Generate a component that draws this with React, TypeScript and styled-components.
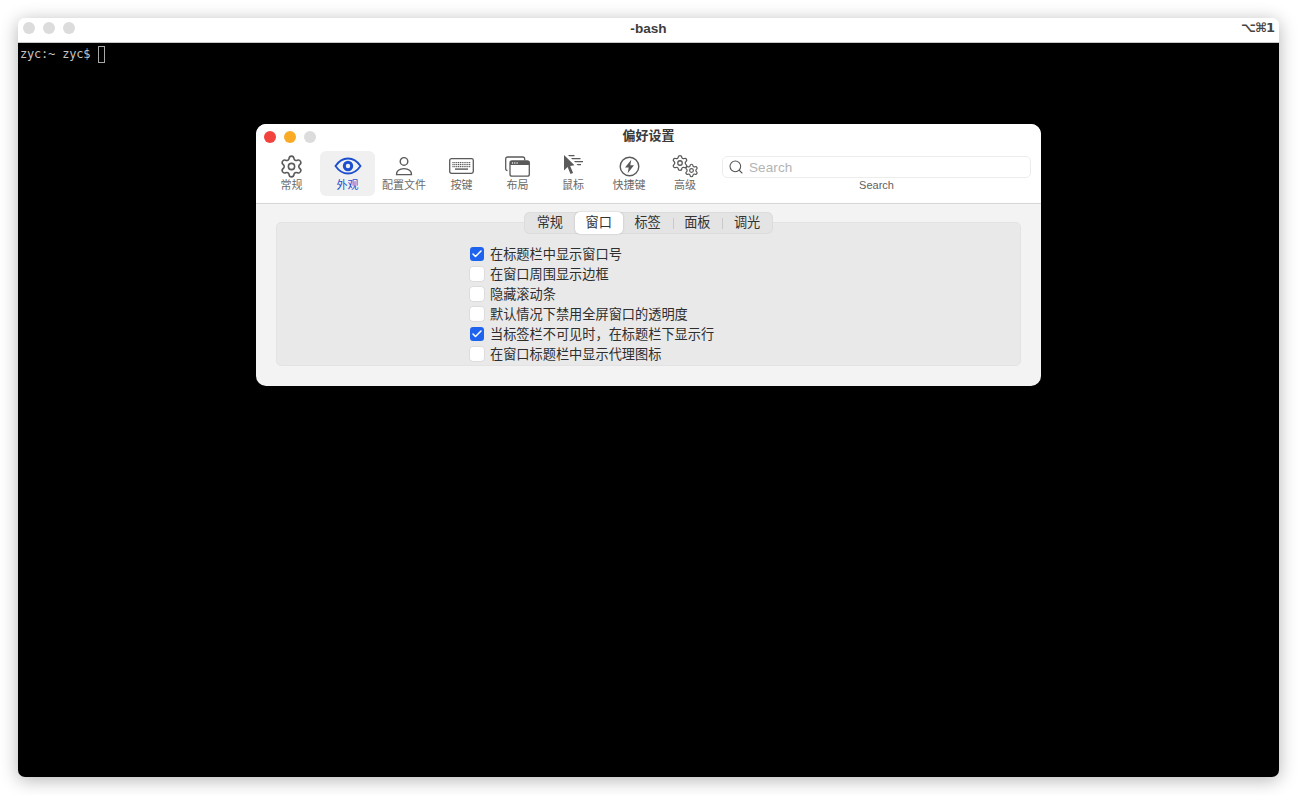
import type { ReactElement } from "react";
import { createGlobalStyle, styled } from "styled-components";
import { Check, Search as SearchIcon, Settings } from "lucide-react";

const Global = createGlobalStyle`
    html, body {
        margin: 0;
        padding: 0;
        background: #ffffff;
    }
    * {
        box-sizing: border-box;
    }
`;

const Desktop = styled.div`
    position: relative;
    width: 1297px;
    height: 795px;
    padding: 18px;
    overflow: hidden;
    font-family: "Liberation Sans", "Noto Sans CJK SC", sans-serif;
`;

const Terminal = styled.div`
    display: flex;
    flex-direction: column;
    width: 1261px;
    height: 759px;
    border-radius: 7px;
    overflow: hidden;
    box-shadow: 0 3px 18px rgba(0, 0, 0, 0.3);
`;

const TitleBar = styled.div`
    position: relative;
    flex: 0 0 25px;
    padding-bottom: 3px;
    display: flex;
    align-items: center;
    justify-content: center;
    background: #ffffff;
    border-bottom: 1px solid #c8c8c8;
`;

const Lights = styled.div`
    position: absolute;
    left: 5px;
    top: 4px;
    display: flex;
    gap: 8px;
`;

const Light = styled.span<{ $color: string }>`
    width: 12px;
    height: 12px;
    border-radius: 50%;
    background: ${(p) => p.$color};
`;

const TitleText = styled.div`
    font-size: 13.6px;
    font-weight: 700;
    color: #3c3c3c;
`;

const Shortcut = styled.div`
    position: absolute;
    right: 5px;
    top: 2px;
    font-size: 13px;
    font-weight: 700;
    color: #444444;
    font-family: "DejaVu Sans", sans-serif;
    letter-spacing: -1px;
`;

const Screen = styled.div`
    flex: 1;
    background: #000000;
    padding: 3px 2px;
    display: flex;
    align-items: flex-start;
    font-family: "DejaVu Sans Mono", monospace;
    font-size: 12px;
    letter-spacing: -0.2px;
    line-height: 16px;
    color: #c4c4c4;
    white-space: pre;
`;

const Cursor = styled.span`
    width: 7px;
    height: 17px;
    margin-left: 1px;
    border: 1px solid #a8a8a8;
`;

const Prefs = styled.div`
    position: absolute;
    left: 256px;
    top: 124px;
    width: 785px;
    height: 262px;
    border-radius: 10px;
    overflow: hidden;
    background: #f3f3f3;
    display: flex;
    flex-direction: column;
`;

const Header = styled.div`
    position: relative;
    flex: 0 0 80px;
    background: #ffffff;
    border-bottom: 1px solid #d6d6d6;
`;

const PrefsLights = styled(Lights)`
    left: 8px;
    top: 7px;
`;

const PrefsTitle = styled.div`
    text-align: center;
    padding-top: 3px;
    padding-bottom: 1px;
    font-size: 13px;
    line-height: 18px;
    font-weight: 700;
    color: #3a3a3a;
`;

const Toolbar = styled.div`
    display: flex;
    padding: 5px 0 0 7px;
`;

const ToolItem = styled.div<{ $active?: boolean; $width?: number }>`
    width: ${(p) => p.$width ?? 56}px;
    height: 45px;
    padding-top: 4px;
    display: flex;
    flex-direction: column;
    align-items: center;
    border-radius: 6px;
    background: ${(p) => (p.$active ? "#f0f0f0" : "transparent")};
    color: ${(p) => (p.$active ? "#1b4fd0" : "#6a6a6a")};
`;

const ToolIcon = styled.div`
    height: 22px;
    display: flex;
    align-items: center;
    justify-content: center;
    color: #5a5a5a;
`;

const ActiveIcon = styled(ToolIcon)`
    color: #1b4fd0;
`;

const ToolLabel = styled.div`
    margin-top: 1px;
    font-size: 11px;
    line-height: 15px;
`;

const SearchBlock = styled.div`
    position: absolute;
    left: 466px;
    top: 32px;
    width: 309px;
    display: flex;
    flex-direction: column;
    align-items: center;
`;

const SearchField = styled.div`
    width: 100%;
    height: 22px;
    padding-left: 5px;
    display: flex;
    align-items: center;
    gap: 5px;
    border: 1px solid #ececec;
    border-radius: 5px;
    font-size: 13.5px;
    letter-spacing: 0.1px;
    color: #b4b4b4;
`;

const SearchLabel = styled.div`
    font-size: 11px;
    line-height: 14px;
    color: #5f5f5f;
`;

const Body = styled.div`
    position: relative;
    flex: 1;
    padding: 18px 20px 20px;
`;

const Tabs = styled.div`
    position: absolute;
    left: 268px;
    top: 8px;
    width: 249px;
    height: 22px;
    padding: 0 1px;
    display: flex;
    align-items: center;
    background: #e4e4e4;
    border-radius: 6px;
    box-shadow: inset 0 0 0 1px #dcdcdc;
`;

const Tab = styled.div<{ $active?: boolean; $divider?: boolean }>`
    position: relative;
    flex: ${(p) => (p.$active ? "0 0 48px" : "1")};
    height: ${(p) => (p.$active ? "22px" : "20px")};
    padding-bottom: 3px;
    display: flex;
    align-items: center;
    justify-content: center;
    font-size: 13.2px;
    color: #333333;
    border-radius: 5px;
    background: ${(p) => (p.$active ? "#ffffff" : "transparent")};
    box-shadow: ${(p) => (p.$active ? "0 0 2px rgba(0, 0, 0, 0.22)" : "none")};

    &::before {
        content: "";
        display: ${(p) => (p.$divider ? "block" : "none")};
        position: absolute;
        left: 0;
        top: 5px;
        height: 11px;
        width: 1px;
        background: #c9c9c9;
    }
`;

const Group = styled.div`
    height: 144px;
    padding: 21px 0 0 193px;
    background: #e9e9e9;
    border: 1px solid #e3e3e3;
    border-radius: 5px;
    display: flex;
    flex-direction: column;
`;

const Row = styled.div`
    height: 20px;
    display: flex;
    align-items: center;
    gap: 6px;
    font-size: 13.2px;
    color: #2e2e2e;
`;

const RowText = styled.span`
    padding-bottom: 2px;
`;

const Box = styled.div<{ $checked?: boolean }>`
    width: 14px;
    height: 14px;
    display: flex;
    align-items: center;
    justify-content: center;
    border-radius: 3px;
    color: #ffffff;
    background: ${(p) => (p.$checked ? "#1d63ee" : "#ffffff")};
    box-shadow: ${(p) => (p.$checked ? "none" : "0 0 0 0.5px #cfcfcf")};
`;

const GearPair = styled.div`
    position: relative;
    width: 28px;
    height: 22px;
    margin-top: -3px;
`;

const SmallGear = styled.div`
    position: absolute;
    right: 0;
    bottom: -2px;
    line-height: 0;
`;

function EyeIcon() {
    return (
        <svg width="28" height="18" viewBox="0 0 28 18" fill="none">
            <path d="M1.5 9C5 3.8 9 1.5 14 1.5S23 3.8 26.5 9C23 14.2 19 16.5 14 16.5S5 14.2 1.5 9Z" stroke="currentColor" strokeWidth="1.8" />
            <circle cx="14" cy="9" r="5.2" fill="currentColor" />
            <circle cx="14" cy="9" r="2.2" fill="#f0f0f0" />
        </svg>
    );
}

function PersonIcon() {
    return (
        <svg width="20" height="20" viewBox="0 0 20 20" fill="none" stroke="currentColor" strokeWidth="1.4">
            <circle cx="10" cy="5.4" r="3.8" />
            <path d="M2.5 18.6h15c.3-3.6-3-6-7.5-6s-7.8 2.4-7.5 6Z" />
        </svg>
    );
}

function KeyboardIcon() {
    const keys: ReactElement[] = [];
    for (let r = 0; r < 3; r++) {
        for (let c = 0; c < 10; c++) {
            keys.push(<rect key={`${r}-${c}`} x={3.4 + c * 1.85} y={4 + r * 2} width="1.2" height="1.2" fill="currentColor" />);
        }
    }
    return (
        <svg width="25" height="16" viewBox="0 0 25 16" fill="none">
            <rect x="0.7" y="0.7" width="23.6" height="14.6" rx="1.8" stroke="currentColor" strokeWidth="1.3" />
            {keys}
            <rect x="6" y="10.4" width="13" height="1.4" fill="currentColor" />
        </svg>
    );
}

function LayoutIcon() {
    return (
        <svg width="25" height="21" viewBox="0 0 25 21" fill="none" stroke="currentColor" strokeWidth="1.3">
            <path d="M2.5 14.5C1.3 14.5.7 13.8.7 12.8V3C.7 1.7 1.5 1 2.7 1h15c1.3 0 2 .7 2 2v1.5" />
            <rect x="5" y="5" width="19.3" height="15.2" rx="2" fill="#ffffff" />
            <path d="M5 5.8c0-.5.4-.8.8-.8h17.7c.5 0 .8.3.8.8V9H5Z" fill="currentColor" stroke="none" />
            <circle cx="7.5" cy="7" r=".7" fill="#ffffff" stroke="none" />
            <circle cx="9.8" cy="7" r=".7" fill="#ffffff" stroke="none" />
            <circle cx="12.1" cy="7" r=".7" fill="#ffffff" stroke="none" />
        </svg>
    );
}

function PointerIcon() {
    return (
        <svg width="21" height="24" viewBox="0 0 21 24" fill="currentColor">
            <path d="M1 1l10.5 10.3-4.3.6 2.9 7-2.6 1.1-2.9-7L1 16.5Z" />
            <path d="M5 1h6.5v1.2H6.2ZM8 4h9.5v1.2H9.2ZM11 7h9v1.2h-7.8ZM13.5 10H18v1.2h-3.3Z" />
        </svg>
    );
}

function BoltIcon() {
    return (
        <svg width="21" height="21" viewBox="0 0 21 21" fill="none">
            <circle cx="10.5" cy="10.5" r="9.3" stroke="currentColor" strokeWidth="1.4" />
            <path d="M12.3 3.8 6 11.6h3.7l-1 5.6 6.3-7.9h-3.7Z" fill="currentColor" />
        </svg>
    );
}

function GearsIcon() {
    return (
        <GearPair>
            <Settings size={18} strokeWidth={1.7} />
            <SmallGear>
                <Settings size={15} strokeWidth={1.9} />
            </SmallGear>
        </GearPair>
    );
}

const tabs = ["常规", "窗口", "标签", "面板", "调光"];

const options = [
    { text: "在标题栏中显示窗口号", checked: true },
    { text: "在窗口周围显示边框", checked: false },
    { text: "隐藏滚动条", checked: false },
    { text: "默认情况下禁用全屏窗口的透明度", checked: false },
    { text: "当标签栏不可见时，在标题栏下显示行", checked: true },
    { text: "在窗口标题栏中显示代理图标", checked: false },
];

export default function App() {
    return (
        <Desktop>
            <Global />
            <Terminal>
                <TitleBar>
                    <Lights>
                        <Light $color="#dcdcdc" />
                        <Light $color="#dcdcdc" />
                        <Light $color="#dcdcdc" />
                    </Lights>
                    <TitleText>-bash</TitleText>
                    <Shortcut>⌥⌘1</Shortcut>
                </TitleBar>
                <Screen>
                    zyc:~ zyc$ <Cursor />
                </Screen>
            </Terminal>

            <Prefs>
                <Header>
                    <PrefsLights>
                        <Light $color="#f2423d" />
                        <Light $color="#f9ab26" />
                        <Light $color="#dcdcdc" />
                    </PrefsLights>
                    <PrefsTitle>偏好设置</PrefsTitle>
                    <Toolbar>
                        <ToolItem $width={57}>
                            <ToolIcon>
                                <Settings size={25} strokeWidth={1.5} />
                            </ToolIcon>
                            <ToolLabel>常规</ToolLabel>
                        </ToolItem>
                        <ToolItem $active $width={55}>
                            <ActiveIcon>
                                <EyeIcon />
                            </ActiveIcon>
                            <ToolLabel>外观</ToolLabel>
                        </ToolItem>
                        <ToolItem $width={58}>
                            <ToolIcon>
                                <PersonIcon />
                            </ToolIcon>
                            <ToolLabel>配置文件</ToolLabel>
                        </ToolItem>
                        <ToolItem $width={57}>
                            <ToolIcon>
                                <KeyboardIcon />
                            </ToolIcon>
                            <ToolLabel>按键</ToolLabel>
                        </ToolItem>
                        <ToolItem $width={55}>
                            <ToolIcon>
                                <LayoutIcon />
                            </ToolIcon>
                            <ToolLabel>布局</ToolLabel>
                        </ToolItem>
                        <ToolItem>
                            <ToolIcon>
                                <PointerIcon />
                            </ToolIcon>
                            <ToolLabel>鼠标</ToolLabel>
                        </ToolItem>
                        <ToolItem>
                            <ToolIcon>
                                <BoltIcon />
                            </ToolIcon>
                            <ToolLabel>快捷键</ToolLabel>
                        </ToolItem>
                        <ToolItem>
                            <ToolIcon>
                                <GearsIcon />
                            </ToolIcon>
                            <ToolLabel>高级</ToolLabel>
                        </ToolItem>
                    </Toolbar>
                    <SearchBlock>
                        <SearchField>
                            <SearchIcon size={16} color="#555555" strokeWidth={1.6} />
                            Search
                        </SearchField>
                        <SearchLabel>Search</SearchLabel>
                    </SearchBlock>
                </Header>
                <Body>
                    <Tabs>
                        {tabs.map((t, i) => (
                            <Tab key={t} $active={i === 1} $divider={i === 3 || i === 4}>
                                {t}
                            </Tab>
                        ))}
                    </Tabs>
                    <Group>
                        {options.map((o) => (
                            <Row key={o.text}>
                                <Box $checked={o.checked}>{o.checked && <Check size={12} strokeWidth={3} />}</Box>
                                <RowText>{o.text}</RowText>
                            </Row>
                        ))}
                    </Group>
                </Body>
            </Prefs>
        </Desktop>
    );
}
